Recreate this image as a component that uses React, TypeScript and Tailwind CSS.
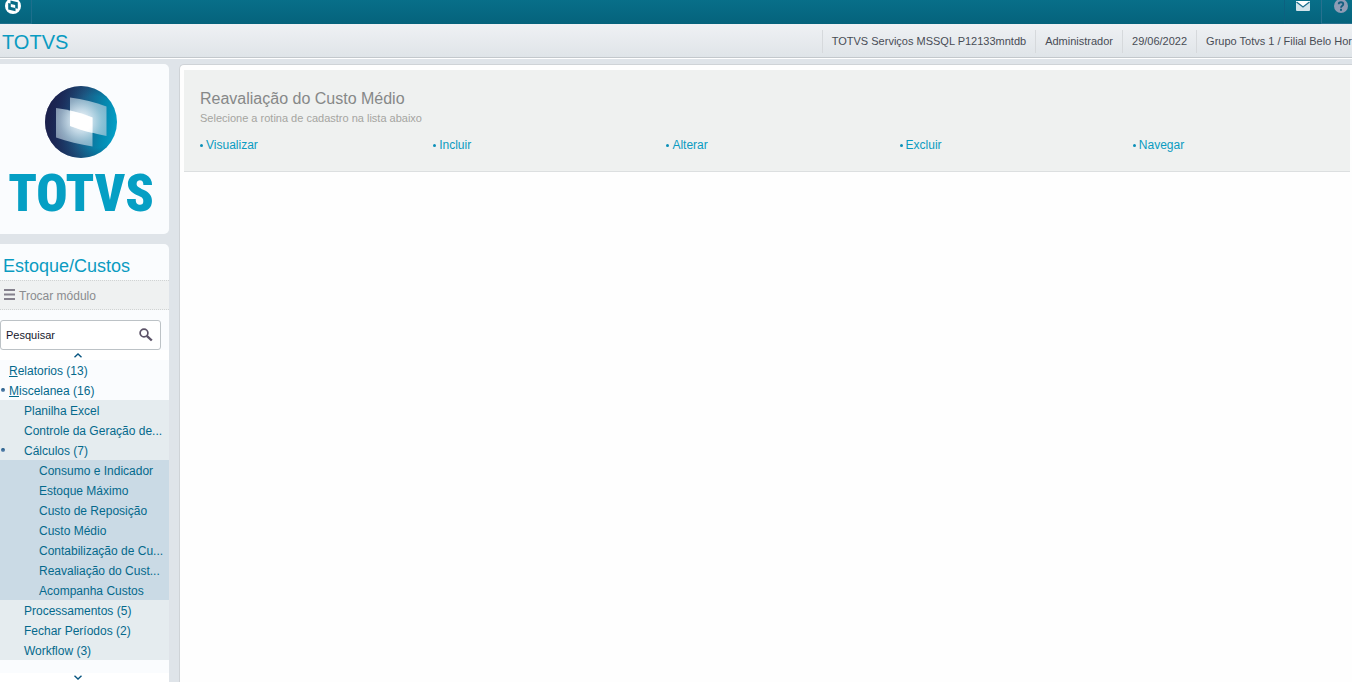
import React from "react";

type Item = { label: string; accessKey?: boolean; open?: boolean; children?: Item[] };

const menu: Item[] = [
  { label: "Relatorios (13)", accessKey: true },
  {
    label: "Miscelanea (16)",
    accessKey: true,
    open: true,
    children: [
      { label: "Planilha Excel" },
      { label: "Controle da Geração de..." },
      {
        label: "Cálculos (7)",
        open: true,
        children: [
          { label: "Consumo e Indicador" },
          { label: "Estoque Máximo" },
          { label: "Custo de Reposição" },
          { label: "Custo Médio" },
          { label: "Contabilização de Cu..." },
          { label: "Reavaliação do Cust..." },
          { label: "Acompanha Custos" },
        ],
      },
      { label: "Processamentos (5)" },
      { label: "Fechar Períodos (2)" },
      { label: "Workflow (3)" },
    ],
  },
];

const session = ["TOTVS Serviços MSSQL P12133mntdb", "Administrador", "29/06/2022", "Grupo Totvs 1 / Filial Belo Hor"];
const actions = ["Visualizar", "Incluir", "Alterar", "Excluir", "Navegar"];

const indent = ["pl-1", "pl-[19px]", "pl-[34px]"];
const levelBg = ["", "bg-[#e5ecef]", "bg-[#cadae5]"];

function MenuList({ items, level }: { items: Item[]; level: number }) {
  return (
    <ul className={levelBg[level]}>
      {items.map((item) => (
        <li key={item.label}>
          <a href="#" className="flex h-5 items-center pt-0.5 text-[12px] leading-[18px] whitespace-nowrap text-[#04698c]">
            <span className="flex w-[5px] shrink-0 justify-end pb-0.5">
              {item.open && <span className="h-1 w-1 rounded-full bg-linear-to-b from-[#0a4f80] to-[#6d92b8]" />}
            </span>
            <span className={indent[level]}>
              {item.accessKey ? (
                <>
                  <span className="underline">{item.label[0]}</span>
                  {item.label.slice(1)}
                </>
              ) : (
                item.label
              )}
            </span>
          </a>
          {item.children && <MenuList items={item.children} level={level + 1} />}
        </li>
      ))}
    </ul>
  );
}

function Globe() {
  return (
    <svg width="72" height="72" viewBox="0 0 72 72" aria-hidden="true">
      <defs>
        <linearGradient id="ball" x1="0" y1="0.35" x2="1" y2="0.5">
          <stop offset="0" stopColor="#1c1a44" />
          <stop offset="0.2" stopColor="#1b2f5e" />
          <stop offset="0.5" stopColor="#1d5b86" />
          <stop offset="0.8" stopColor="#0587ae" />
          <stop offset="1" stopColor="#039fc6" />
        </linearGradient>
        <radialGradient id="shade" cx="0.68" cy="0.5" r="0.65">
          <stop offset="0.55" stopColor="#1b2350" stopOpacity="0" />
          <stop offset="1" stopColor="#1b2350" stopOpacity="0.6" />
        </radialGradient>
        <radialGradient id="glow" gradientUnits="userSpaceOnUse" cx="36" cy="35" r="30">
          <stop offset="0" stopColor="#fff" stopOpacity="1" />
          <stop offset="0.4" stopColor="#dcecf5" stopOpacity="0.85" />
          <stop offset="0.7" stopColor="#c4dce8" stopOpacity="0.7" />
          <stop offset="1" stopColor="#b9cbdb" stopOpacity="0.62" />
        </radialGradient>
        <radialGradient id="core" gradientUnits="userSpaceOnUse" cx="36" cy="35" r="18">
          <stop offset="0.6" stopColor="#fff" />
          <stop offset="1" stopColor="#fff" stopOpacity="0.6" />
        </radialGradient>
      </defs>
      <circle cx="36" cy="36" r="36" fill="url(#ball)" />
      <circle cx="36" cy="36" r="36" fill="url(#shade)" />
      <path d="M25 11.500C38 13 50 16.500 61.500 20.500V50C49 47.500 37 44 25 40Z" fill="url(#glow)" />
      <path d="M11 22C24 23.500 36 27 47.500 31.500V60.500C35 58.500 22 55.500 11 51.500Z" fill="url(#glow)" />
      <path d="M25 24.500C33 26.200 40 28.600 47.500 31.500V47C39 45 32 42.500 25 40Z" fill="url(#core)" />
    </svg>
  );
}

export default function App() {
  return (
    <div className="flex h-screen flex-col overflow-hidden bg-[#dfe4e9] font-['Liberation_Sans',Arial,sans-serif]">
      <header className="flex h-6 shrink-0 justify-between bg-linear-to-b from-[#086f89] to-[#05637c]">
        <button aria-label="Início" className="flex w-8 items-start border-r border-b border-[#1d6f8c] pl-[5px]">
          <svg width="16" height="14" viewBox="0 2 16 14" aria-hidden="true">
            <circle cx="8" cy="8" r="8" fill="#fff" />
            <path d="M5.500 2.500L12.800 4.200V10.700L5.500 9Z" fill="#086c86" />
            <path d="M3.200 5L10.500 6.800V13.300L3.200 11.500Z" fill="#086c86" />
            <path d="M5.800 5.900L10.200 7V10.100L5.800 9Z" fill="#fff" />
          </svg>
        </button>
        <div className="flex">
          <button aria-label="Mensagens" className="flex w-[37px] items-start justify-center border-b border-l border-[#0c6180] pt-px">
            <svg width="14" height="10" viewBox="0 0 14 10" aria-hidden="true">
              <rect width="14" height="10" rx="1" fill="#d3e3ea" />
              <path d="M0 0H14V1L7 6.500L0 1Z" fill="#fff" />
              <path d="M0.500 1L7 6L13.500 1" fill="none" stroke="#1b6d8c" strokeWidth="1.300" />
            </svg>
          </button>
          <button aria-label="Ajuda" className="flex w-[31px] items-start border-b border-l border-[#27718f] pl-3">
            <svg width="14" height="13" viewBox="0 1 14 13" aria-hidden="true">
              <circle cx="7" cy="7" r="7" fill="#8f9cb5" />
              <path d="M4.700 5.200C4.700 2.600 9.300 2.600 9.300 5.200C9.300 6.800 7 6.800 7 8.700" fill="none" stroke="#155f80" strokeWidth="1.800" />
              <rect x="6" y="9.800" width="2" height="2" fill="#155f80" />
            </svg>
          </button>
        </div>
      </header>

      <div className="flex h-[35px] shrink-0 items-center justify-between border-b border-white bg-linear-to-b from-[#eff1f4] to-[#dfe4e8] shadow-[inset_0_-1px_0_#c3c8cc]">
        <h1 className="pt-0.5 pl-0.5 text-[20px] leading-6 text-[#0a9bc1]">TOTVS</h1>
        <ul className="flex text-[11px] text-[#484c55]">
          {session.map((text) => (
            <li key={text} className="flex h-[23px] items-center border-l border-[#d6d9dc] px-[9px] whitespace-nowrap last:pr-0">
              {text}
            </li>
          ))}
        </ul>
      </div>

      <div className="flex min-h-0 flex-1 gap-[10px] pt-[5px]">
        <aside className="flex w-[169px] shrink-0 flex-col gap-[10px]">
          <div className="flex h-[170px] shrink-0 flex-col items-center rounded-r-[5px] bg-[#fafcfe] pt-[22px] pr-[7px]">
            <Globe />
            <span className="pt-[9px] font-['Roboto_Condensed','Roboto',sans-serif] text-[52px] leading-[54px] font-black text-[#059fc4]">TOTVS</span>
          </div>

          <nav className="flex min-h-0 flex-1 flex-col rounded-tr-[5px] bg-[#fafcfe]">
            <h2 className="h-9 shrink-0 pt-[9px] pl-[3px] text-[18px] leading-[26px] text-[#0a9bc1]">Estoque/Custos</h2>
            <button className="flex h-[30px] shrink-0 items-center gap-[3px] border-y border-dotted border-[#d0d3d3] bg-[#eff1f1] pl-1 text-[12px] text-[#8a8c8f]">
              <svg width="12" height="12" viewBox="0 0 12 12" fill="#84808c" aria-hidden="true">
                <path d="M0 0H11V2H0ZM0 4.500H11V6.500H0ZM0 9H11V11H0Z" />
              </svg>
              <span className="pt-0.5">Trocar módulo</span>
            </button>
            <label className="mt-[10px] mr-2 flex h-[30px] shrink-0 items-center rounded-[3px] border border-[#bcc2c6] bg-white pr-[7px] pl-[5px]">
              <input aria-label="Pesquisar" defaultValue="Pesquisar" className="min-w-0 flex-1 text-[11px] text-[#15172c] outline-none" />
              <svg width="14" height="14" viewBox="0 0 14 14" fill="none" stroke="#5c5368" aria-hidden="true">
                <circle cx="5" cy="5" r="3.900" strokeWidth="1.700" />
                <path d="M7.800 7.800L12.800 12.500" strokeWidth="2.400" />
              </svg>
            </label>
            <button aria-label="Rolar para cima" className="flex h-[10px] shrink-0 items-center bg-white pl-[74px]">
              <svg width="8" height="5" viewBox="0 0 8 5" fill="none" stroke="#075580" strokeWidth="1.400" aria-hidden="true">
                <path d="M0.500 4.200L4 1L7.500 4.200" />
              </svg>
            </button>
            <div className="min-h-0 flex-1 overflow-hidden">
              <MenuList items={menu} level={0} />
            </div>
            <button aria-label="Rolar para baixo" className="flex h-[9px] shrink-0 items-center bg-white pl-[74px]">
              <svg width="8" height="5" viewBox="0 0 8 5" fill="none" stroke="#075580" strokeWidth="1.400" aria-hidden="true">
                <path d="M0.500 0.800L4 4L7.500 0.800" />
              </svg>
            </button>
          </nav>
        </aside>

        <main className="min-w-0 flex-1 rounded-tl-[5px] border-t border-l border-[#cfd3d7] bg-[#fefefe] pt-[5px] pr-0.5 pl-1">
          <section className="border-b border-[#dcdfe0] bg-[#eff1f0] pt-[18px] pb-[17px]">
            <h2 className="pl-4 text-[16px] leading-[22px] text-[#868888]">Reavaliação do Custo Médio</h2>
            <p className="pl-4 text-[11px] leading-4 text-[#a5a5a1]">Selecione a rotina de cadastro na lista abaixo</p>
            <ul className="grid grid-cols-5 pt-[10px]">
              {actions.map((label) => (
                <li key={label} className="pl-4 text-[12px] leading-[18px] text-[#0a9bc1]">
                  <a href="#" className="flex items-center gap-[3px]">
                    <span className="h-[3px] w-[3px] rounded-full bg-[#0a8fb8]" />
                    {label}
                  </a>
                </li>
              ))}
            </ul>
          </section>
        </main>
      </div>
    </div>
  );
}
